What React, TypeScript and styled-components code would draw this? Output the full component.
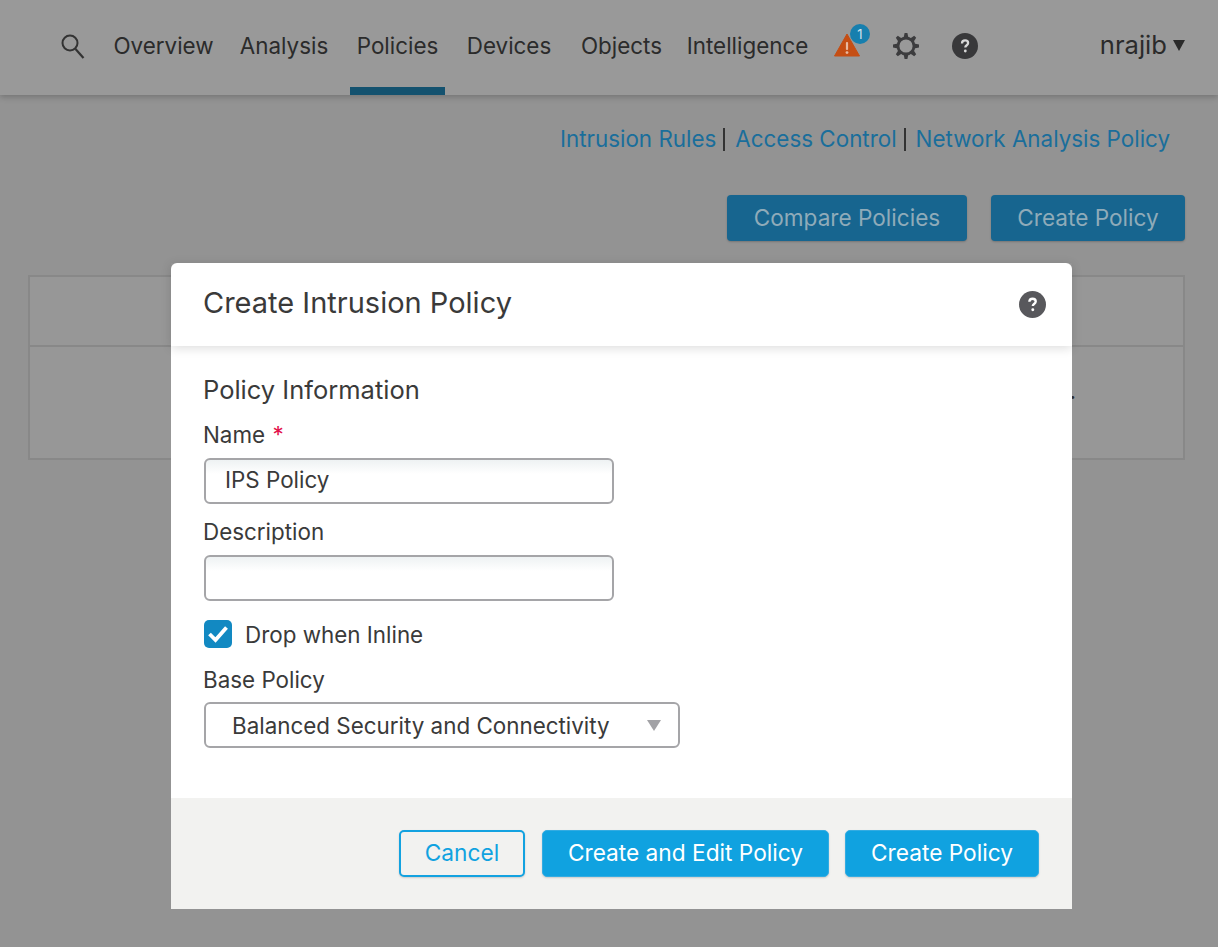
import React from "react";
import styled, { createGlobalStyle } from "styled-components";

const Global = createGlobalStyle`
  html, body { margin: 0; padding: 0; background: #939393; }
  body { font-family: Inter, "Liberation Sans", sans-serif; color: #333; }
  * { box-sizing: border-box; }
`;

const Page = styled.div`
  position: relative;
  width: 1218px;
  height: 947px;
  overflow: hidden;
  background: #939393;
`;
const Header = styled.header`
  height: 95px;
  background: #999;
  box-shadow: 0 2px 6px rgba(0,0,0,.22);
  display: flex;
  align-items: stretch;
  padding: 0 33px 0 60px;
`;
const Nav = styled.nav`
  display: flex;
  align-items: stretch;
`;
const NavItem = styled.a<{ $active?: boolean; $w: number; $ml?: number }>`
  width: ${p => p.$w}px;
  margin-left: ${p => p.$ml ?? 0}px;
  display: flex;
  justify-content: center;
  padding-top: 31px;
  font-size: 22.4px;
  line-height: 30px;
  color: #2b2b2b;
  box-shadow: ${p => (p.$active ? "inset 0 -8px 0 #14526f" : "none")};
`;
const SearchBox = styled.span`
  width: 28px;
  margin-right: 26px;
  padding-top: 33px;
  color: #333;
`;
const IconRow = styled.div`
  display: flex;
  align-items: flex-start;
  padding-top: 24px;
  margin-left: 26px;
  gap: 33px;
`;
const AlertWrap = styled.span`
  position: relative;
  display: block;
  width: 26px;
  height: 33px;
  padding-top: 9px;
`;
const Badge = styled.span`
  position: absolute;
  top: 0;
  left: 16px;
  width: 20px;
  height: 20px;
  border-radius: 50%;
  background: #177fae;
  color: #cfe4ee;
  font-size: 13px;
  line-height: 20px;
  text-align: center;
`;
const HeaderIcon = styled.span`
  display: block;
  height: 26px;
  margin-top: 9px;
`;
const User = styled.div`
  margin-left: auto;
  padding-top: 30px;
  font-size: 25.6px;
  line-height: 30px;
  color: #2b2b2b;
  display: flex;
  gap: 6px;
`;
const Caret = styled.span`
  width: 0;
  height: 0;
  margin-top: 10px;
  border-left: 6.5px solid transparent;
  border-right: 6.5px solid transparent;
  border-top: 11px solid #2b2b2b;
`;
const Links = styled.div`
  display: flex;
  justify-content: flex-end;
  align-items: center;
  padding: 29px 48px 0 0;
  font-size: 22.4px;
  line-height: 30px;
`;
const LinkText = styled.a`
  color: #1a6e9b;
`;
const Divider = styled.span`
  width: 2px;
  height: 23px;
  margin: 0 10px 0 7px;
  background: #333;
`;
const ActionRow = styled.div`
  display: flex;
  justify-content: flex-end;
  gap: 24px;
  padding: 41px 33px 0 0;
`;
const DimButton = styled.div<{ $w: number }>`
  width: ${p => p.$w}px;
  height: 46px;
  background: #17658f;
  border-radius: 4px;
  color: #8fabb9;
  font-size: 22.6px;
  line-height: 46px;
  text-align: center;
  box-shadow: 0 1px 2px rgba(0,0,0,.2);
`;
const TableShell = styled.div`
  margin: 34px 33px 0 28px;
  height: 185px;
  border: 2px solid #888;
  background: #979797;
  display: grid;
  grid-template-rows: 70px 1fr;
`;
const TableHead = styled.div`
  border-bottom: 2px solid #888;
`;
const TableBody = styled.div`
  padding: 29px 107px 0 0;
  text-align: right;
  font-size: 22.4px;
  line-height: 30px;
  color: #2b2b2b;
`;
const Modal = styled.div`
  position: absolute;
  left: 171px;
  top: 263px;
  width: 901px;
  height: 646px;
  background: #fff;
  border-radius: 6px 6px 0 0;
  display: flex;
  flex-direction: column;
`;
const ModalHead = styled.div`
  height: 83px;
  flex: none;
  display: flex;
  justify-content: space-between;
  padding: 22px 26px 0 32px;
  box-shadow: 0 2px 10px rgba(0,0,0,.14);
`;
const ModalHelp = styled.span`
  display: block;
  height: 27px;
  margin-top: 6px;
`;
const Title = styled.h1`
  margin: 0;
  font-size: 29px;
  line-height: 36px;
  font-weight: 400;
  color: #3a3a3a;
`;
const Body = styled.div`
  flex: 1;
  padding: 29px 33px 0 32px;
  color: #3a3a3a;
`;
const Section = styled.h2`
  margin: 0 0 15px;
  font-size: 25.5px;
  line-height: 30px;
  font-weight: 400;
  color: #3a3a3a;
`;
const Label = styled.label`
  display: block;
  font-size: 22.4px;
  line-height: 30px;
  color: #3a3a3a;
`;
const Req = styled.span`
  color: #e2104b;
  margin-left: 1px;
`;
const TextField = styled.div`
  width: 410px;
  height: 46px;
  margin: 8px 0 13px 1px;
  padding-left: 19px;
  border: 2px solid #a5a5a8;
  border-radius: 6px;
  background: linear-gradient(#eef2f3, #fff 14px);
  font-size: 22.4px;
  line-height: 40px;
  color: #3a3a3a;
`;
const CheckRow = styled.div`
  display: flex;
  align-items: center;
  gap: 13px;
  margin: 19px 0 17px 1px;
  height: 28px;
  font-size: 22.4px;
  color: #3a3a3a;
`;
const Check = styled.span`
  width: 28px;
  height: 28px;
  border-radius: 5px;
  background: #1289c2;
  display: flex;
  align-items: center;
  justify-content: center;
`;
const Select = styled.div`
  width: 476px;
  height: 46px;
  margin: 7px 0 0 1px;
  padding: 0 17px 0 26px;
  border: 2px solid #a5a5a8;
  border-radius: 6px;
  display: flex;
  align-items: center;
  justify-content: space-between;
  font-size: 22.4px;
  color: #3a3a3a;
`;
const SelectCaret = styled.span`
  width: 0;
  height: 0;
  border-left: 7px solid transparent;
  border-right: 7px solid transparent;
  border-top: 11px solid #a2a2a6;
`;
const Footer = styled.div`
  height: 111px;
  flex: none;
  background: #f2f2f0;
  display: flex;
  justify-content: flex-end;
  gap: 16px;
  padding: 32px 33px 0 0;
`;
const Btn = styled.button<{ $w: number; $ghost?: boolean }>`
  width: ${p => p.$w}px;
  height: 47px;
  margin-right: ${p => (p.$ghost ? 1 : 0)}px;
  border-radius: 5px;
  border: ${p => (p.$ghost ? "2px solid #13a2e0" : "1px solid #33ace2")};
  background: ${p => (p.$ghost ? "#f2f2f0" : "#10a2e0")};
  color: ${p => (p.$ghost ? "#10a2e0" : "#fff")};
  font-family: inherit;
  font-size: 22.7px;
  padding: 0 0 2px;
  box-shadow: 0 1px 2px rgba(0,0,0,.16);
`;

const Help = ({ size, bg, glyph }: { size: number; bg: string; glyph: string }) => (
  <svg width={size} height={size} viewBox="0 0 26 26">
    <circle cx="13" cy="13" r="13" fill={bg} />
    <path d="M10 10.4c0-1.9 1.3-3 3.1-3s3 1 3 2.6c0 1.3-.8 1.9-1.6 2.5-.8.6-1.2 1-1.2 2" fill="none" stroke={glyph} strokeWidth="2.3" />
    <circle cx="13.3" cy="18" r="1.4" fill={glyph} />
  </svg>
);

const teeth = [0, 45, 90, 135, 180, 225, 270, 315];

export default function App() {
  return (
    <Page>
      <Global />
      <Header>
        <SearchBox>
          <svg width="26" height="26" viewBox="0 0 26 26" fill="none" stroke="#333" strokeWidth="2">
            <circle cx="10" cy="10" r="7.5" />
            <path d="M15.5 16l8 9" strokeWidth="2.2" />
          </svg>
        </SearchBox>
        <Nav>
          <NavItem $w={99}>Overview</NavItem>
          <NavItem $w={88} $ml={27}>Analysis</NavItem>
          <NavItem $w={95} $ml={22} $active>Policies</NavItem>
          <NavItem $w={84} $ml={22}>Devices</NavItem>
          <NavItem $w={81} $ml={30}>Objects</NavItem>
          <NavItem $w={121} $ml={25}>Intelligence</NavItem>
        </Nav>
        <IconRow>
          <AlertWrap>
            <svg width="26" height="24" viewBox="0 0 26 24">
              <path d="M13 1L25.5 23H.5z" fill="#c54e14" stroke="#c54e14" strokeLinejoin="round" />
              <rect x="11.9" y="9" width="2.2" height="8" rx="1" fill="#e8b9a0" />
              <circle cx="13" cy="19.6" r="1.4" fill="#e8b9a0" />
            </svg>
            <Badge>1</Badge>
          </AlertWrap>
          <HeaderIcon>
            <svg width="26" height="26" viewBox="0 0 26 26">
              {teeth.map(a => (
                <path key={a} d="M10.3 6L11.6 0h2.8l1.3 6z" fill="#3c3c3e" transform={`rotate(${a} 13 13)`} />
              ))}
              <circle cx="13" cy="13" r="8" fill="none" stroke="#3c3c3e" strokeWidth="2.8" />
            </svg>
          </HeaderIcon>
          <HeaderIcon>
            <Help size={26} bg="#38383a" glyph="#d8d8d8" />
          </HeaderIcon>
        </IconRow>
        <User>nrajib<Caret /></User>
      </Header>
      <Links>
        <LinkText>Intrusion Rules</LinkText>
        <Divider />
        <LinkText>Access Control</LinkText>
        <Divider />
        <LinkText>Network Analysis Policy</LinkText>
      </Links>
      <ActionRow>
        <DimButton $w={240}>Compare Policies</DimButton>
        <DimButton $w={194}>Create Policy</DimButton>
      </ActionRow>
      <TableShell>
        <TableHead />
        <TableBody>.</TableBody>
      </TableShell>
      <Modal>
        <ModalHead>
          <Title>Create Intrusion Policy</Title>
          <ModalHelp><Help size={27} bg="#58585c" glyph="#fff" /></ModalHelp>
        </ModalHead>
        <Body>
          <Section>Policy Information</Section>
          <Label>Name<Req> *</Req></Label>
          <TextField>IPS Policy</TextField>
          <Label>Description</Label>
          <TextField />
          <CheckRow>
            <Check>
              <svg width="22" height="18" viewBox="0 0 22 18" fill="none" stroke="#fff" strokeWidth="3.8">
                <path d="M2.5 9l6 6L19.5 2.5" />
              </svg>
            </Check>
            Drop when Inline
          </CheckRow>
          <Label>Base Policy</Label>
          <Select>Balanced Security and Connectivity<SelectCaret /></Select>
        </Body>
        <Footer>
          <Btn $w={126} $ghost>Cancel</Btn>
          <Btn $w={287}>Create and Edit Policy</Btn>
          <Btn $w={194}>Create Policy</Btn>
        </Footer>
      </Modal>
    </Page>
  );
}
